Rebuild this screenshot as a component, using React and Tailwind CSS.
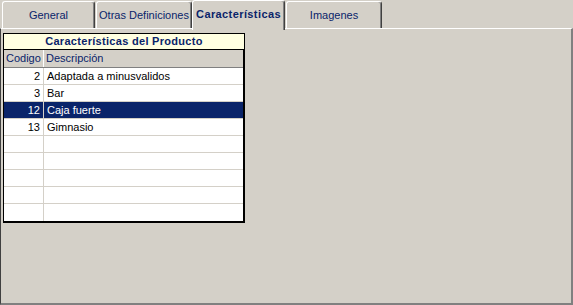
import React from 'react';

const tabs = [
  { id: 'general', label: 'General', w: 'w-[93px]' },
  { id: 'otras', label: 'Otras Definiciones', w: 'w-[96px]' },
  { id: 'caract', label: 'Características', w: 'w-[93px]' },
  { id: 'imagenes', label: 'Imagenes', w: 'w-[96px]' },
];

const rows = [
  { codigo: 2, descripcion: 'Adaptada a minusvalidos' },
  { codigo: 3, descripcion: 'Bar' },
  { codigo: 12, descripcion: 'Caja fuerte' },
  { codigo: 13, descripcion: 'Gimnasio' },
  null,
  null,
  null,
  null,
  null,
];

export default function App() {
  const active = 'caract';
  const selectedRow = 2;

  return (
    <div className="w-[573px] h-[305px] bg-[#d4d0c8] flex flex-col overflow-hidden font-['Liberation_Sans',Arial,sans-serif] text-[11px] text-[#0a246a]">
      {/* Tab strip */}
      <div className="h-[28px] flex items-end pl-[2px] gap-px">
        {tabs.map((tab) => {
          const isActive = tab.id === active;
          return (
            <div
              key={tab.id}
              className={`${tab.w} flex items-center justify-center rounded-t-[3px] border-l border-t border-white border-r border-r-[#404040] shadow-[inset_-1px_0_#808080] bg-[#d4d0c8] ${
                isActive
                  ? 'h-[30px] -mb-[2px] -ml-px relative z-10 font-bold tracking-[0.4px] pb-[3px]'
                  : 'h-[27px]'
              }`}
            >
              {tab.label}
            </div>
          );
        })}
      </div>

      {/* Page panel */}
      <div className="flex-1 border-t border-white border-l border-l-[#404040] border-r-2 border-r-[#808080] border-b-2 border-b-[#808080] pt-[4px] pl-[2px]">
        <div className="w-[242px] flex flex-col">
          <div className="h-[17px] bg-[#ffffe1] border border-black flex items-center justify-center font-bold tracking-[0.3px]">
            Características del Producto
          </div>
          <div className="border-l border-black border-r-2 border-b-2 bg-white">
            {/* header */}
            <div className="flex h-[18px] bg-[#d4d0c8] border-b border-[#808080]">
              <div className="w-[40px] border-r border-white pl-[2px] flex items-center">Codigo</div>
              <div className="flex-1 pl-[2px] flex items-center">Descripción</div>
            </div>
            {rows.map((row, i) => {
              const sel = i === selectedRow;
              return (
                <div
                  key={i}
                  className={`flex h-[17px] border-b border-[#d4d0c8] last:border-b-0 ${
                    sel ? 'bg-[#0a246a] text-white' : 'text-black'
                  }`}
                >
                  <div className="w-[40px] border-r border-r-[#d4d0c8] pr-[3px] flex items-center justify-end">
                    {row ? row.codigo : ''}
                  </div>
                  <div className="flex-1 pl-[3px] flex items-center">{row ? row.descripcion : ''}</div>
                </div>
              );
            })}
          </div>
        </div>
      </div>
    </div>
  );
}
